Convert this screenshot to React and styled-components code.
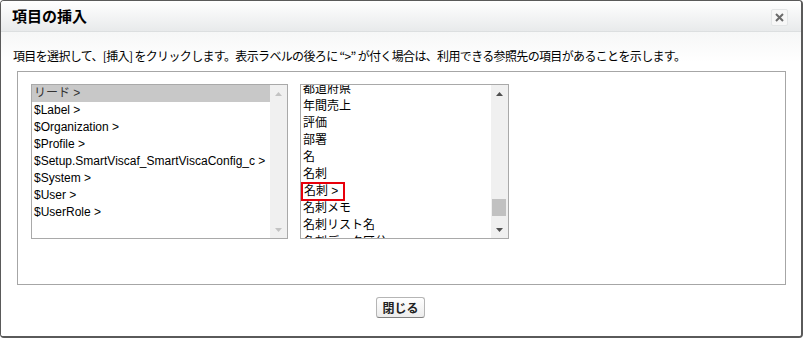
import React from "react";
import styled, { createGlobalStyle } from "styled-components";

const GlobalStyle = createGlobalStyle`
  html, body {
    margin: 0;
    padding: 0;
    background: #ffffff;
  }
  body {
    font-family: "Liberation Sans", "Noto Sans CJK JP", sans-serif;
    font-size: 12px;
    color: #000;
  }
`;

const Dialog = styled.div`
  box-sizing: border-box;
  width: 803px;
  height: 338px;
  border: 1px solid #5a5a5a;
  border-right: 2px solid #5a5a5a;
  border-bottom: 2px solid #5a5a5a;
  border-radius: 4px;
  background: #fff;
  display: flex;
  flex-direction: column;
  overflow: hidden;
`;

const Header = styled.div`
  height: 30px;
  flex: none;
  display: flex;
  align-items: center;
  justify-content: space-between;
  padding: 0 13px 0 11px;
  background: linear-gradient(#ffffff, #e8eaeb);
  border-bottom: 1px solid #dcdfe0;
`;

const Title = styled.h2`
  margin: 0;
  font-family: "Noto Sans CJK JP", sans-serif;
  font-size: 15px;
  font-weight: 700;
  color: #000;
  line-height: 20px;
`;

const CloseIcon = styled.button`
  width: 17px;
  height: 17px;
  padding: 0;
  margin-top: 2px;
  border: 1px solid #e3e5e6;
  border-radius: 2px;
  background: #f7f7f7;
  display: flex;
  align-items: center;
  justify-content: center;
`;

const Body = styled.div`
  flex: 1;
  display: flex;
  flex-direction: column;
  padding: 16px 15px 0 16px;
  background: linear-gradient(#f6f7f7, #ffffff 30px);
`;

const Instruction = styled.p`
  margin: 0 0 7px -4px;
  font-family: "Noto Sans CJK JP", sans-serif;
  font-size: 12px;
  line-height: 16px;
  letter-spacing: -0.65px;
  color: #000;
`;

const Frame = styled.div`
  height: 214px;
  box-sizing: border-box;
  border: 1px solid #a6a6a6;
  padding: 12px 13px;
  display: flex;
  align-items: flex-start;
  gap: 12px;
  background: #fff;
`;

const ListBox = styled.div`
  width: ${(p) => p.$width}px;
  height: 155px;
  box-sizing: border-box;
  border: 1px solid #a9a9a9;
  display: flex;
  background: #fff;
`;

const ListItems = styled.ul`
  flex: 1;
  margin: 0;
  padding: 0;
  list-style: none;
  overflow: hidden;
  & > li:first-child {
    margin-top: ${(p) => -(p.$scroll || 0)}px;
  }
`;

const Item = styled.li`
  height: 17px;
  line-height: 17px;
  padding-left: 2px;
  white-space: nowrap;
  font-size: 12px;
  color: ${(p) => (p.$selected ? "#333" : "#000")};
  background: ${(p) => (p.$selected ? "#c8c8c8" : "transparent")};
`;

const Marked = styled.span`
  display: inline-block;
  box-sizing: border-box;
  height: 19px;
  line-height: 15px;
  margin-left: -2px;
  margin-top: -1px;
  padding: 0 5px 0 1px;
  border: 2px solid #e8000b;
`;

const ScrollBar = styled.div`
  width: 17px;
  flex: none;
  background: #f0f0f0;
  display: flex;
  flex-direction: column;
  align-items: center;
`;

const Arrow = styled.div`
  height: 17px;
  display: flex;
  align-items: center;
  justify-content: center;
`;

const Track = styled.div`
  flex: 1;
  width: 100%;
  position: relative;
`;

const Thumb = styled.div`
  position: absolute;
  left: 1px;
  right: 2px;
  top: ${(p) => p.$top}px;
  height: 17px;
  background: #c1c1c1;
`;

const Footer = styled.div`
  display: flex;
  justify-content: center;
  padding-top: 12px;
  padding-right: 2px;
`;

const Button = styled.button`
  height: 21px;
  padding: 0 5px;
  font-family: "Noto Sans CJK JP", sans-serif;
  font-size: 12px;
  font-weight: 700;
  color: #222;
  background: linear-gradient(#ffffff, #ececec);
  border: 1px solid #b5b5b5;
  border-bottom-color: #7f7f7f;
  border-radius: 3px;
  line-height: 17px;
`;

const Tri = ({ up, color }) => (
  <svg width="7" height="4" viewBox="0 0 7 4">
    <polygon points={up ? "0,4 7,4 3.5,0" : "0,0 7,0 3.5,4"} fill={color} />
  </svg>
);

const Scroll = ({ dim, thumb }) => {
  const c = dim ? "#c3c3c3" : "#505050";
  return (
    <ScrollBar>
      <Arrow>
        <Tri up color={c} />
      </Arrow>
      <Track>{thumb != null && <Thumb $top={thumb} />}</Track>
      <Arrow>
        <Tri color={c} />
      </Arrow>
    </ScrollBar>
  );
};

const leftItems = [
  "リード >",
  "$Label >",
  "$Organization >",
  "$Profile >",
  "$Setup.SmartViscaf_SmartViscaConfig_c >",
  "$System >",
  "$User >",
  "$UserRole >",
];

const rightItems = [
  "都道府県",
  "年間売上",
  "評価",
  "部署",
  "名",
  "名刺",
  "名刺 >",
  "名刺メモ",
  "名刺リスト名",
  "名刺データ区分",
];

export default function App() {
  return (
    <>
      <GlobalStyle />
      <Dialog>
        <Header>
          <Title>項目の挿入</Title>
          <CloseIcon aria-label="閉じる">
            <svg width="9" height="9" viewBox="0 0 9 9">
              <path d="M1 1 L8 8 M8 1 L1 8" stroke="#6b6b6b" strokeWidth="2" />
            </svg>
          </CloseIcon>
        </Header>
        <Body>
          <Instruction>
            項目を選択して、[挿入] をクリックします。表示ラベルの後ろに “&gt;” が付く場合は、利用できる参照先の項目があることを示します。
          </Instruction>
          <Frame>
            <ListBox $width={257}>
              <ListItems>
                {leftItems.map((t, i) => (
                  <Item key={t} $selected={i === 0}>
                    {t}
                  </Item>
                ))}
              </ListItems>
              <Scroll dim />
            </ListBox>
            <ListBox $width={209}>
              <ListItems $scroll={4}>
                {rightItems.map((t, i) => (
                  <Item key={t}>
                    {i === 6 ? <Marked>{t}</Marked> : t}
                  </Item>
                ))}
              </ListItems>
              <Scroll thumb={97} />
            </ListBox>
          </Frame>
          <Footer>
            <Button>閉じる</Button>
          </Footer>
        </Body>
      </Dialog>
    </>
  );
}
